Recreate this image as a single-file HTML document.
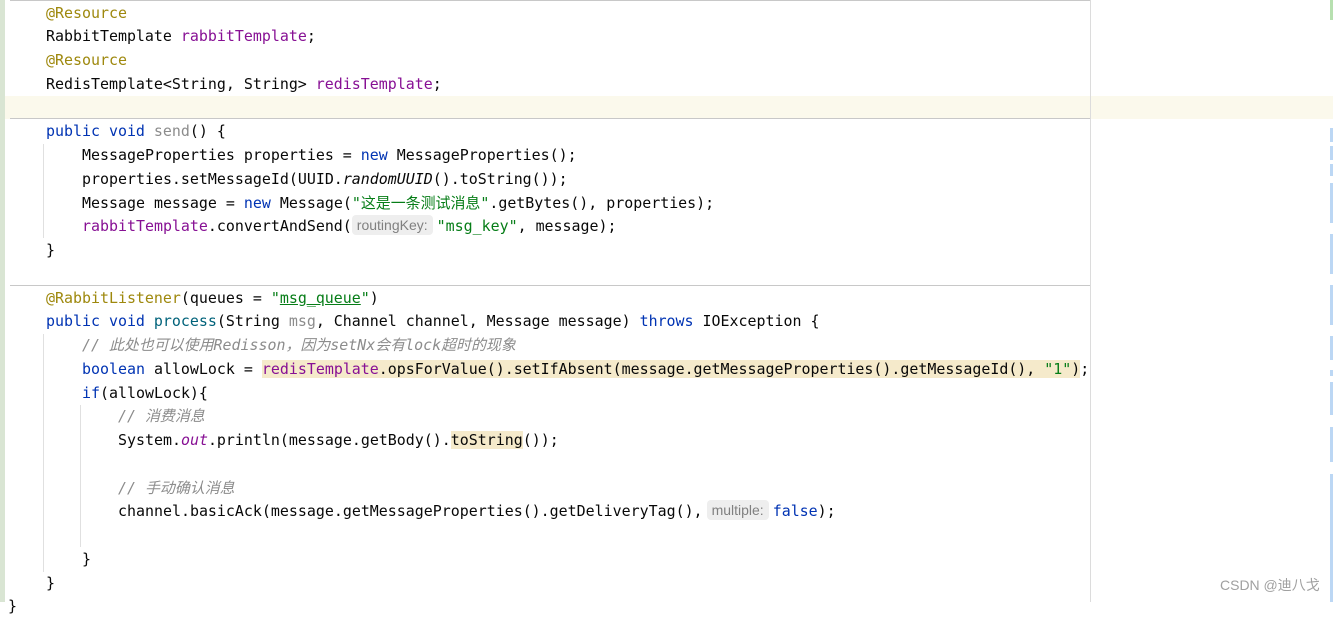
<!DOCTYPE html>
<html><head><meta charset="utf-8"><style>
*{margin:0;padding:0;box-sizing:border-box}
body{width:1335px;height:602px;background:#fff;position:relative;overflow:hidden;font-family:"DejaVu Sans Mono","Noto Sans CJK SC",monospace;font-size:14.95px;color:#080808}
.l{position:absolute;left:0;height:24px;line-height:24px;white-space:pre;top:0}
.a{color:#9e880d}.f{color:#871094}.k{color:#0033b3}.s{color:#067d17}.c{color:#8c8c8c;font-style:italic}.g{color:#8c8c8c}.m{color:#00627a}
.hl{background:#f5eacb}
.h{display:inline-block;font-family:"Liberation Sans",sans-serif;font-size:14px;color:#808080;background:#eeeeee;border-radius:4px;height:20px;line-height:20px;padding:0 5px;vertical-align:1px;margin-right:4px}
.abs{position:absolute}
</style></head><body>
<div class="abs" style="left:0;top:0;width:5px;height:602px;background:#d9e5d3"></div>
<div class="abs" style="left:10px;top:0;width:1080px;height:1px;background:#c8c8c8"></div>
<div class="abs" style="left:5px;top:96px;width:1328px;height:23px;background:#fbf9ec"></div>
<div class="abs" style="left:10px;top:118px;width:1080px;height:1px;background:#c8c8c8"></div>
<div class="abs" style="left:10px;top:285px;width:1080px;height:1px;background:#c8c8c8"></div>
<div class="abs" style="left:1090px;top:0;width:1px;height:602px;background:#dcdcdc"></div>
<div class="abs" style="left:43px;top:144px;width:1px;height:94px;background:#e0e0e0"></div>
<div class="abs" style="left:43px;top:334px;width:1px;height:238px;background:#e0e0e0"></div>
<div class="abs" style="left:80px;top:405px;width:1px;height:142px;background:#e0e0e0"></div>
<div class="abs" style="left:1330px;top:0;width:3px;height:20px;background:#b7e0b0"></div>
<div class="abs" style="left:1330px;top:128px;width:3px;height:14px;background:#bcd7f4"></div>
<div class="abs" style="left:1330px;top:146px;width:3px;height:14px;background:#bcd7f4"></div>
<div class="abs" style="left:1330px;top:164px;width:3px;height:12px;background:#bcd7f4"></div>
<div class="abs" style="left:1330px;top:183px;width:3px;height:40px;background:#bcd7f4"></div>
<div class="abs" style="left:1330px;top:234px;width:3px;height:40px;background:#bcd7f4"></div>
<div class="abs" style="left:1330px;top:285px;width:3px;height:40px;background:#bcd7f4"></div>
<div class="abs" style="left:1330px;top:336px;width:3px;height:24px;background:#bcd7f4"></div>
<div class="abs" style="left:1330px;top:370px;width:3px;height:6px;background:#bcd7f4"></div>
<div class="abs" style="left:1330px;top:382px;width:3px;height:33px;background:#bcd7f4"></div>
<div class="abs" style="left:1330px;top:427px;width:3px;height:35px;background:#bcd7f4"></div>
<div class="abs" style="left:1330px;top:474px;width:3px;height:128px;background:#bcd7f4"></div>

<div class="l" style="top:1px;left:46px"><span class="a">@Resource</span></div>
<div class="l" style="top:24px;left:46px">RabbitTemplate <span class="f">rabbitTemplate</span>;</div>
<div class="l" style="top:48px;left:46px"><span class="a">@Resource</span></div>
<div class="l" style="top:72px;left:46px">RedisTemplate&lt;String, String&gt; <span class="f">redisTemplate</span>;</div>
<div class="l" style="top:119px;left:46px"><span class="k">public void </span><span class="g">send</span>() {</div>
<div class="l" style="top:143px;left:82px">MessageProperties properties = <span class="k">new</span> MessageProperties();</div>
<div class="l" style="top:167px;left:82px">properties.setMessageId(UUID.<i>randomUUID</i>().toString());</div>
<div class="l" style="top:191px;left:82px">Message message = <span class="k">new</span> Message(<span class="s">"这是一条测试消息"</span>.getBytes(), properties);</div>
<div class="l" style="top:214px;left:82px"><span class="f">rabbitTemplate</span>.convertAndSend(<span class="h">routingKey:</span><span class="s">"msg_key"</span>, message);</div>
<div class="l" style="top:238px;left:46px">}</div>
<div class="l" style="top:286px;left:46px"><span class="a">@RabbitListener</span>(queues = <span class="s">"<u>msg_queue</u>"</span>)</div>
<div class="l" style="top:309px;left:46px"><span class="k">public void </span><span class="m">process</span>(String <span class="g">msg</span>, Channel channel, Message message) <span class="k">throws</span> IOException {</div>
<div class="l" style="top:333px;left:82px"><span class="c">// 此处也可以使用Redisson，因为setNx会有lock超时的现象</span></div>
<div class="l" style="top:357px;left:82px"><span class="k">boolean</span> allowLock = <span class="hl"><span class="f">redisTemplate</span>.opsForValue().setIfAbsent(message.getMessageProperties().getMessageId(), <span class="s">"1"</span>)</span>;</div>
<div class="l" style="top:381px;left:82px"><span class="k">if</span>(allowLock){</div>
<div class="l" style="top:404px;left:118px"><span class="c">// 消费消息</span></div>
<div class="l" style="top:428px;left:118px">System.<i class="f">out</i>.println(message.getBody().<span class="hl">toString</span>());</div>
<div class="l" style="top:476px;left:118px"><span class="c">// 手动确认消息</span></div>
<div class="l" style="top:499px;left:118px">channel.basicAck(message.getMessageProperties().getDeliveryTag(),<span class="h" style="margin-left:4px">multiple:</span><span class="k">false</span>);</div>
<div class="l" style="top:547px;left:82px">}</div>
<div class="l" style="top:571px;left:46px">}</div>
<div class="l" style="top:594px;left:8px">}</div>
<div class="abs" style="left:1220px;top:575px;font-family:'Liberation Sans','Noto Sans CJK SC',sans-serif;font-size:14px;color:#a0a0a0">CSDN @迪八戈</div>
</body></html>
